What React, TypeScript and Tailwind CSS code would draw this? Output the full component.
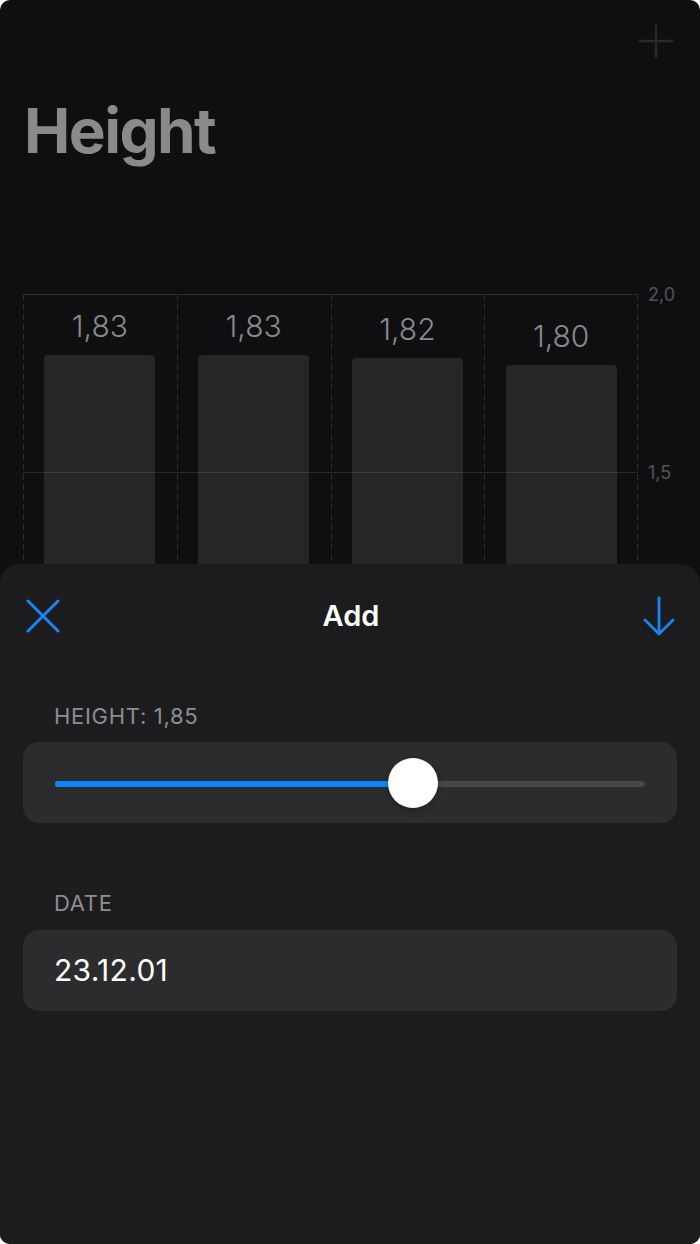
type Entry = { id: number; value: number };

const entries: Entry[] = [
  { id: 1, value: 1.83 },
  { id: 2, value: 1.83 },
  { id: 3, value: 1.82 },
  { id: 4, value: 1.8 },
];

// pixels per 1.0 of height on the chart
const SCALE = 356;
const fmt = (v: number) => v.toFixed(2).replace(".", ",");

const dashed =
  "bg-[repeating-linear-gradient(to_bottom,#2d2d30_0_6px,transparent_6px_10px)]";

function PlusIcon() {
  return (
    <svg width="34" height="34" viewBox="0 0 34 34" fill="none" stroke="#2a2a2d" strokeWidth="2.4" strokeLinecap="round">
      <path d="M17 1v32M1 17h32" />
    </svg>
  );
}

function CloseIcon() {
  return (
    <svg width="34" height="34" viewBox="0 0 34 34" fill="none" stroke="#1a84f4" strokeWidth="3" strokeLinecap="round">
      <path d="M2 2l30 30M32 2L2 32" />
    </svg>
  );
}

function SaveIcon() {
  return (
    <svg width="34" height="40" viewBox="0 0 34 40" fill="none" stroke="#1a84f4" strokeWidth="2.8" strokeLinecap="round" strokeLinejoin="round">
      <path d="M17 2v36M3 24l14 14 14-14" />
    </svg>
  );
}

function Chart() {
  return (
    <div className="flex pl-[23px]">
      <div className="relative w-[615px] h-[712px]">
        {/* grid */}
        <div className="absolute left-0 right-0 top-0 h-px bg-[#2b2b2e]" />
        <div className="grid grid-cols-4 h-full">
          {entries.map((e, i) => (
            <div key={e.id} className="relative flex flex-col items-center justify-end">
              <div className={`absolute left-0 top-0 bottom-0 w-px ${dashed}`} />
              {i === entries.length - 1 && (
                <div className={`absolute right-0 top-0 bottom-0 w-px ${dashed}`} />
              )}
              <span className="text-[30px] font-light leading-none text-[#8a8a8e] mb-[14px]">
                {fmt(e.value)}
              </span>
              <div
                className="w-[111px] rounded-t-[4px] bg-[#262628]"
                style={{ height: e.value * SCALE }}
              />
            </div>
          ))}
        </div>
        <div className="absolute left-0 right-0 top-[178px] h-px bg-white/10" />
        <span className="absolute left-[625px] top-[-8px] text-[18px] leading-none text-[#535357]">
          2,0
        </span>
        <span className="absolute left-[625px] top-[170px] text-[18px] leading-none text-[#535357]">
          1,5
        </span>
      </div>
    </div>
  );
}

function AddSheet() {
  const progress = 0.606;
  return (
    <div className="absolute inset-x-0 top-[564px] bottom-0 rounded-t-[20px] bg-[#1c1c1e] flex flex-col">
      <div className="h-[104px] flex items-center justify-between pl-[26px] pr-[24px]">
        <CloseIcon />
        <span className="text-[29px] font-semibold text-white">Add</span>
        <SaveIcon />
      </div>

      <div className="px-[23px]">
        <p className="pl-[31px] mt-[37px] text-[22px] leading-none tracking-[0.7px] text-[#8d8d92]">
          HEIGHT: 1,85
        </p>
        <div className="mt-[15px] h-[81px] rounded-[16px] bg-[#2c2c2e] flex items-center px-[32px]">
          <div className="relative flex-1 h-[6px] mt-[3px] rounded-full bg-[#48484a]">
            <div
              className="absolute left-0 top-0 h-full rounded-full bg-[#0a84ff]"
              style={{ width: `${progress * 100}%` }}
            />
            <div
              className="absolute top-1/2 w-[50px] h-[50px] -translate-x-1/2 -translate-y-1/2 mt-[-1px] rounded-full bg-white shadow-[0_2px_6px_rgba(0,0,0,0.3)]"
              style={{ left: `${progress * 100}%` }}
            />
          </div>
        </div>

        <p className="pl-[31px] mt-[69px] text-[22px] leading-none tracking-[0.7px] text-[#8d8d92]">
          DATE
        </p>
        <div className="mt-[16px] h-[81px] rounded-[16px] bg-[#2c2c2e] flex items-center px-[31px]">
          <span className="text-[30px] tracking-[0.3px] text-white">23.12.01</span>
        </div>
      </div>
    </div>
  );
}

export default function App() {
  return (
    <div className="w-[700px] h-[1244px] bg-white font-['Inter',sans-serif]">
      <div className="relative w-full h-full rounded-[10px] overflow-hidden bg-[#0f0f11]">
        <div className="h-[82px] flex items-center justify-end pr-[27px]">
          <PlusIcon />
        </div>
        <h1 className="pl-[24px] mt-[18px] text-[62px] font-bold leading-none tracking-tight text-[#8a8a8a]">
          Height
        </h1>
        <div className="mt-[132px]">
          <Chart />
        </div>
        <AddSheet />
      </div>
    </div>
  );
}
